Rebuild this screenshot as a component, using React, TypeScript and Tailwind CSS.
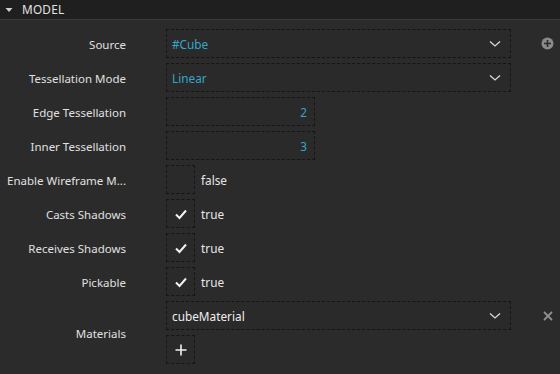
import React from "react";

const font = { fontFamily: '"Noto Sans", "Open Sans", sans-serif' };

function Chevron() {
  return (
    <svg width="12" height="8" viewBox="0 0 12 8" className="shrink-0">
      <path d="M1 1.5 L6 6 L11 1.5" fill="none" stroke="#d8d8d8" strokeWidth="1.3" />
    </svg>
  );
}

function Check() {
  return (
    <svg width="14" height="12" viewBox="0 0 14 12">
      <path d="M2 6.5 L5.5 10 L12 2.5" fill="none" stroke="#f2f2f2" strokeWidth="2" />
    </svg>
  );
}

function Row({ label, children }: { label: string; children: React.ReactNode }) {
  return (
    <div className="flex items-center h-[29px]">
      <div className="w-[126px] pt-[2px] text-right text-[11.5px] text-[#e0e0e0] whitespace-nowrap">{label}</div>
      <div className="ml-[40px] flex items-center h-full flex-1">{children}</div>
    </div>
  );
}

function Dropdown({ value, color }: { value: string; color: string }) {
  return (
    <div className="w-[345px] h-[29px] border border-dashed border-[#151515] bg-[#2a2a2a] flex items-center justify-between pl-[5px] pr-[9px]">
      <span className={`pt-[2px] text-[11.8px] ${color}`}>{value}</span>
      <Chevron />
    </div>
  );
}

function NumberBox({ value }: { value: string }) {
  return (
    <div className="w-[149px] h-[29px] border border-dashed border-[#151515] bg-[#2a2a2a] flex items-center justify-end pr-[7px]">
      <span className="pt-[2px] text-[11.8px] text-[#35a6c9]">{value}</span>
    </div>
  );
}

function CheckBox({ checked }: { checked: boolean }) {
  return (
    <div className="flex items-center">
      <div className="w-[29px] h-[29px] border border-dashed border-[#151515] bg-[#2a2a2a] flex items-center justify-center">
        {checked && <Check />}
      </div>
      <span className="ml-[6px] pt-[2px] text-[11.8px] text-[#e6e6e6]">{checked ? "true" : "false"}</span>
    </div>
  );
}

export default function App() {
  return (
    <div className="w-[560px] h-[374px] bg-[#2b2b2b] overflow-hidden" style={font}>
      <div className="h-[20px] bg-[#1f1f1f] border-b border-[#3a3a3a] flex items-center">
        <svg width="8" height="6" viewBox="0 0 8 6" className="ml-[5px]">
          <path d="M0.5 1 L7.5 1 L4 5 Z" fill="#cfcfcf" />
        </svg>
        <span className="ml-[9px] pt-[1px] text-[11.8px] text-[#e2e2e2] tracking-[0.2px]">MODEL</span>
      </div>
      <div className="flex flex-col gap-[5px] pt-[9px]">
        <Row label="Source">
          <Dropdown value="#Cube" color="text-[#35a6c9]" />
          <svg width="13" height="13" viewBox="0 0 13 13" className="ml-[30px]">
            <circle cx="6.5" cy="6.5" r="6" fill="#8a8a8a" />
            <path d="M6.5 3 V10 M3 6.5 H10" stroke="#2b2b2b" strokeWidth="1.6" />
          </svg>
        </Row>
        <Row label="Tessellation Mode">
          <Dropdown value="Linear" color="text-[#35a6c9]" />
        </Row>
        <Row label="Edge Tessellation">
          <NumberBox value="2" />
        </Row>
        <Row label="Inner Tessellation">
          <NumberBox value="3" />
        </Row>
        <Row label="Enable Wireframe M...">
          <CheckBox checked={false} />
        </Row>
        <Row label="Casts Shadows">
          <CheckBox checked />
        </Row>
        <Row label="Receives Shadows">
          <CheckBox checked />
        </Row>
        <Row label="Pickable">
          <CheckBox checked />
        </Row>
        <div className="flex items-center">
          <div className="w-[126px] pt-[2px] text-right text-[11.5px] text-[#e0e0e0]">Materials</div>
          <div className="ml-[40px] flex flex-col gap-[5px]">
            <div className="flex items-center">
              <Dropdown value="cubeMaterial" color="text-[#eeeeee]" />
              <svg width="10" height="10" viewBox="0 0 10 10" className="ml-[32px]">
                <path d="M1 1 L9 9 M9 1 L1 9" stroke="#8f8f8f" strokeWidth="1.8" />
              </svg>
            </div>
            <div className="w-[29px] h-[29px] border border-dashed border-[#151515] bg-[#2a2a2a] flex items-center justify-center">
              <svg width="12" height="12" viewBox="0 0 12 12">
                <path d="M6 0.5 V11.5 M0.5 6 H11.5" stroke="#f0f0f0" strokeWidth="1.6" />
              </svg>
            </div>
          </div>
        </div>
      </div>
    </div>
  );
}
